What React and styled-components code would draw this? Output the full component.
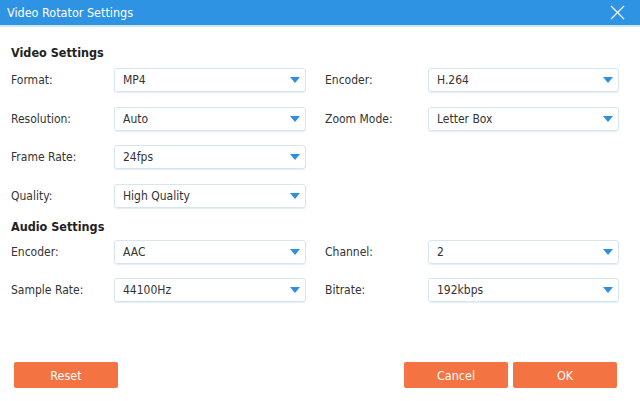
import React from "react";
import styled, { createGlobalStyle } from "styled-components";

const Global = createGlobalStyle`
  html, body { margin: 0; padding: 0; background: #fff; }
  body { width: 640px; height: 401px; overflow: hidden; font-family: "DejaVu Sans Condensed", "DejaVu Sans", sans-serif; }
`;

const Window = styled.div`
  width: 640px;
  height: 401px;
  display: flex;
  flex-direction: column;
  background: #fff;
`;

const TitleBar = styled.div`
  height: 25px;
  background: #2e93e3;
  border-bottom: 2px solid #cfe6f7;
  display: flex;
  align-items: center;
  justify-content: space-between;
  padding: 0 15px 0 7px;
  color: #fff;
  font-size: 12.5px;
  flex-shrink: 0;
`;

const CloseBtn = styled.svg`
  width: 15px;
  height: 15px;
  display: block;
`;

const Body = styled.div`
  flex: 1;
  display: flex;
  flex-direction: column;
  padding: 19px 21px 13px 11px;
`;

const Heading = styled.div`
  font-weight: bold;
  font-size: 12.5px;
  color: #222;
  height: 14px;
  line-height: 14px;
  margin-bottom: ${(p) => p.$mb}px;
`;

const Grid = styled.div`
  display: grid;
  grid-template-columns: 103px 192px 19px 103px 191px;
  row-gap: ${(p) => p.$gap}px;
  align-items: center;
  margin-bottom: ${(p) => p.$mb || 0}px;
`;

const Label = styled.div`
  font-size: 12px;
  color: #333;
  grid-column: ${(p) => p.$col};
`;

const SelectBox = styled.div`
  grid-column: ${(p) => p.$col};
  height: 22px;
  border: 1px solid #d7e5f1;
  border-radius: 3px;
  box-shadow: 0 1px 1px rgba(180, 205, 225, 0.35);
  display: flex;
  align-items: center;
  justify-content: space-between;
  padding: 0 5px 0 8px;
  font-size: 12px;
  color: #333;
`;

const Arrow = styled.span`
  width: 0;
  height: 0;
  border-left: 5px solid transparent;
  border-right: 5px solid transparent;
  border-top: 6px solid #2e8fe0;
`;

const Footer = styled.div`
  margin-top: auto;
  display: flex;
  align-items: center;
  gap: 5px;
  padding: 0 2px 0 3px;
`;

const Button = styled.button`
  width: 104px;
  height: 26px;
  border: none;
  border-radius: 2px;
  background: #f47342;
  color: #fff;
  font-family: inherit;
  font-size: 12.5px;
  cursor: pointer;
  margin-left: ${(p) => (p.$push ? "auto" : "0")};
`;

const Field = ({ label, value, col }) => (
  <>
    <Label $col={col}>{label}</Label>
    <SelectBox $col={col + 1}>
      <span>{value}</span>
      <Arrow />
    </SelectBox>
  </>
);

export default function App() {
  return (
    <>
      <Global />
      <Window>
        <TitleBar>
          <span>Video Rotator Settings</span>
          <CloseBtn viewBox="0 0 15 15">
            <path d="M1 1 L14 14 M14 1 L1 14" stroke="#fff" strokeWidth="1.2" fill="none" />
          </CloseBtn>
        </TitleBar>
        <Body>
          <Heading $mb={8}>Video Settings</Heading>
          <Grid $gap={14.5} $mb={12}>
            <Field label="Format:" value="MP4" col={1} />
            <Field label="Encoder:" value="H.264" col={4} />
            <Field label="Resolution:" value="Auto" col={1} />
            <Field label="Zoom Mode:" value="Letter Box" col={4} />
            <Field label="Frame Rate:" value="24fps" col={1} />
            <Field label="Quality:" value="High Quality" col={1} />
          </Grid>
          <Heading $mb={6}>Audio Settings</Heading>
          <Grid $gap={14}>
            <Field label="Encoder:" value="AAC" col={1} />
            <Field label="Channel:" value="2" col={4} />
            <Field label="Sample Rate:" value="44100Hz" col={1} />
            <Field label="Bitrate:" value="192kbps" col={4} />
          </Grid>
          <Footer>
            <Button>Reset</Button>
            <Button $push>Cancel</Button>
            <Button>OK</Button>
          </Footer>
        </Body>
      </Window>
    </>
  );
}
